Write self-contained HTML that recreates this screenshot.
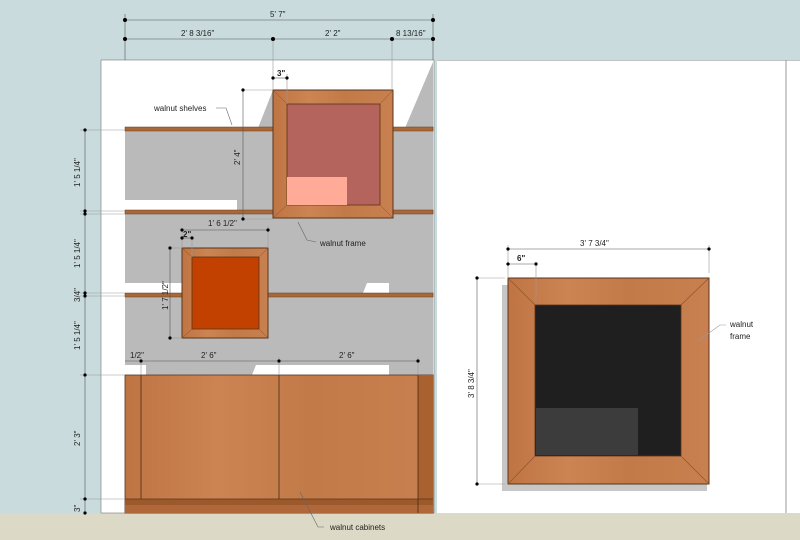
<!DOCTYPE html>
<html><head><meta charset="utf-8"><style>
html,body{margin:0;padding:0;background:#c9dbdc;}
svg{display:block}
text{font-family:"Liberation Sans",sans-serif;font-size:8px;fill:#222;}
</style></head><body>
<svg width="800" height="540" viewBox="0 0 800 540" xmlns="http://www.w3.org/2000/svg">
<defs>
<linearGradient id="wood" x1="0" y1="0" x2="1" y2="0">
<stop offset="0" stop-color="#bf7443"/><stop offset="0.3" stop-color="#cc8453"/><stop offset="0.6" stop-color="#c27a48"/><stop offset="1" stop-color="#c98050"/>
</linearGradient>
</defs>
<rect x="0" y="0" width="800" height="540" fill="#c9dbdc"/>
<rect x="0" y="513" width="800" height="27" fill="#dcd9c6"/>
<!-- left panel -->
<rect x="101" y="60" width="333" height="453" fill="#fff" stroke="#777" stroke-width="0.6"/>
<!-- right panel -->
<rect x="437" y="60" width="363" height="453" fill="#fff"/>
<line x1="437" y1="60.5" x2="800" y2="60.5" stroke="#888" stroke-width="0.6"/>
<line x1="786" y1="60" x2="786" y2="513" stroke="#999" stroke-width="1"/>
<!-- gray area -->
<rect x="125" y="130" width="308" height="245" fill="#bababa"/>
<polygon points="258,128 273,90 273,128" fill="#bababa"/>
<polygon points="405,128 433,62 433,128" fill="#bababa"/>
<!-- white patches -->
<rect x="125" y="200" width="112" height="10" fill="#fff"/>
<rect x="125" y="283" width="58" height="10" fill="#fff"/>
<polygon points="363,293 367,283 389,283 389,293" fill="#fff"/>
<rect x="125" y="365" width="21" height="10" fill="#fff"/>
<polygon points="252,375 256,365 389,365 389,375" fill="#fff"/>
<!-- shelves -->
<rect x="125" y="127" width="308" height="4" fill="#a8683a" stroke="#6a3e1e" stroke-width="0.5"/>
<rect x="125" y="210" width="308" height="4" fill="#a8683a" stroke="#6a3e1e" stroke-width="0.5"/>
<rect x="125" y="293" width="308" height="4" fill="#a8683a" stroke="#6a3e1e" stroke-width="0.5"/>
<!-- big frame -->
<rect x="273" y="90" width="120" height="128" fill="url(#wood)" stroke="#5a3418" stroke-width="1"/>
<rect x="287" y="104" width="93" height="101" fill="#b4645c" stroke="#5a3418" stroke-width="0.8"/>
<rect x="287" y="177" width="60" height="28" fill="#ffab98"/>
<g stroke="#8a5028" stroke-width="0.5"><line x1="273" y1="90" x2="287" y2="104"/><line x1="393" y1="90" x2="380" y2="104"/><line x1="273" y1="218" x2="287" y2="205"/><line x1="393" y1="218" x2="380" y2="205"/></g>
<!-- small frame -->
<rect x="182" y="248" width="86" height="90" fill="url(#wood)" stroke="#5a3418" stroke-width="1"/>
<rect x="192" y="257" width="67" height="72" fill="#c24101" stroke="#5a3418" stroke-width="0.8"/>
<g stroke="#8a5028" stroke-width="0.5"><line x1="182" y1="248" x2="192" y2="257"/><line x1="268" y1="248" x2="259" y2="257"/><line x1="182" y1="338" x2="192" y2="329"/><line x1="268" y1="338" x2="259" y2="329"/></g>
<!-- cabinet -->
<rect x="125" y="375" width="308" height="138" fill="url(#wood)" stroke="#5a3418" stroke-width="0.8"/>
<rect x="418" y="375" width="15" height="138" fill="#a8612f"/>
<rect x="125" y="499" width="308" height="14" fill="#b0683a"/>
<rect x="125" y="499" width="308" height="6" fill="#9c5a2c"/>
<line x1="125" y1="499" x2="433" y2="499" stroke="#5a3418" stroke-width="0.8"/>
<g stroke="#4a2a12" stroke-width="0.8"><line x1="141" y1="375" x2="141" y2="499"/><line x1="279" y1="375" x2="279" y2="499"/><line x1="418" y1="375" x2="418" y2="513"/></g>
<!-- right frame -->
<rect x="502" y="285" width="205" height="206" fill="#c7c7c7"/>
<rect x="508" y="278" width="201" height="206" fill="url(#wood)" stroke="#5a3418" stroke-width="1"/>
<rect x="535" y="305" width="146" height="151" fill="#1f1f1f" stroke="#5a3418" stroke-width="0.8"/>
<rect x="536" y="408" width="102" height="47" fill="#3c3c3c"/>
<g stroke="#8a5028" stroke-width="0.6"><line x1="508" y1="278" x2="535" y2="305"/><line x1="709" y1="278" x2="681" y2="305"/><line x1="508" y1="484" x2="535" y2="456"/><line x1="709" y1="484" x2="681" y2="456"/></g>
<!-- dimension lines -->
<g stroke="#555" stroke-width="0.6" fill="none">
<line x1="125" y1="20" x2="433" y2="20"/>
<line x1="125" y1="39" x2="433" y2="39"/>
<line x1="125" y1="14" x2="125" y2="60"/><line x1="433" y1="14" x2="433" y2="60"/>
<line x1="273" y1="39" x2="273" y2="90" stroke="#999"/>
<line x1="392" y1="39" x2="392" y2="90" stroke="#999"/>
<line x1="273" y1="78" x2="287" y2="78"/><line x1="287" y1="74" x2="287" y2="104" stroke="#999"/>
<line x1="243" y1="90" x2="273" y2="90" stroke="#999"/>
<line x1="243" y1="90" x2="243" y2="219"/>
<line x1="243" y1="219" x2="273" y2="219" stroke="#999"/>
<line x1="182" y1="230" x2="268" y2="230"/><line x1="268" y1="226" x2="268" y2="248" stroke="#999"/>
<line x1="182" y1="230" x2="182" y2="248" stroke="#999"/>
<line x1="182" y1="238" x2="192" y2="238"/><line x1="192" y1="236" x2="192" y2="257" stroke="#999"/>
<line x1="170" y1="248" x2="182" y2="248" stroke="#999"/>
<line x1="170" y1="248" x2="170" y2="338"/>
<line x1="170" y1="338" x2="182" y2="338" stroke="#999"/>
<line x1="85" y1="130" x2="85" y2="513"/>
<g stroke="#999"><line x1="80" y1="130" x2="125" y2="130"/><line x1="80" y1="211" x2="125" y2="211"/><line x1="80" y1="214" x2="125" y2="214"/><line x1="80" y1="293" x2="125" y2="293"/><line x1="80" y1="296" x2="125" y2="296"/><line x1="80" y1="375" x2="125" y2="375"/><line x1="80" y1="499" x2="125" y2="499"/></g>
<line x1="125" y1="361" x2="418" y2="361"/>
<line x1="141" y1="357" x2="141" y2="375" stroke="#999"/>
<line x1="279" y1="357" x2="279" y2="375" stroke="#999"/>
<line x1="418" y1="357" x2="418" y2="375" stroke="#999"/>
<line x1="508" y1="249" x2="709" y2="249"/>
<line x1="508" y1="245" x2="508" y2="278" stroke="#999"/><line x1="709" y1="245" x2="709" y2="273" stroke="#999"/>
<line x1="508" y1="264" x2="536" y2="264"/><line x1="536" y1="262" x2="536" y2="302" stroke="#999"/>
<line x1="477" y1="278" x2="505" y2="278" stroke="#999"/>
<line x1="477" y1="278" x2="477" y2="484"/>
<line x1="477" y1="484" x2="505" y2="484" stroke="#999"/>
<!-- leaders -->
<polyline points="216,108 226,108 232,125" stroke="#666"/>
<polyline points="298,222 307,240 316,242" stroke="#666"/>
<polyline points="300,492 318,527 324,527" stroke="#666"/>
<polyline points="698,341 720,325 726,325" stroke="#999"/>
</g>
<g fill="#000">
<circle cx="125" cy="20" r="2"/><circle cx="433" cy="20" r="2"/>
<circle cx="125" cy="39" r="2"/><circle cx="273" cy="39" r="2"/><circle cx="392" cy="39" r="2"/><circle cx="433" cy="39" r="2"/>
<circle cx="273" cy="78" r="1.6"/><circle cx="287" cy="78" r="1.6"/>
<circle cx="243" cy="90" r="1.6"/><circle cx="243" cy="219" r="1.6"/>
<circle cx="182" cy="230" r="1.6"/><circle cx="268" cy="230" r="1.6"/>
<circle cx="182" cy="238" r="1.6"/><circle cx="192" cy="238" r="1.6"/>
<circle cx="170" cy="248" r="1.6"/><circle cx="170" cy="338" r="1.6"/>
<circle cx="85" cy="130" r="1.6"/><circle cx="85" cy="211" r="1.6"/><circle cx="85" cy="214" r="1.6"/><circle cx="85" cy="293" r="1.6"/><circle cx="85" cy="296" r="1.6"/><circle cx="85" cy="375" r="1.6"/><circle cx="85" cy="499" r="1.6"/><circle cx="85" cy="513" r="1.6"/>
<circle cx="141" cy="361" r="1.6"/><circle cx="279" cy="361" r="1.6"/><circle cx="418" cy="361" r="1.6"/>
<circle cx="508" cy="249" r="1.6"/><circle cx="709" cy="249" r="1.6"/>
<circle cx="508" cy="264" r="1.6"/><circle cx="536" cy="264" r="1.6"/>
<circle cx="477" cy="278" r="1.6"/><circle cx="477" cy="484" r="1.6"/>
</g>
<!-- labels -->
<text x="270" y="17">5' 7"</text>
<text x="181" y="36">2' 8 3/16"</text>
<text x="325" y="36">2' 2"</text>
<text x="396" y="36">8 13/16"</text>
<text x="277" y="76" font-weight="bold">3"</text>
<text x="154" y="111">walnut shelves</text>
<text x="208" y="226">1' 6 1/2"</text>
<text x="320" y="246">walnut frame</text>
<text x="183" y="237" font-weight="bold">2"</text>
<text x="130" y="358">1/2"</text>
<text x="201" y="358">2' 6"</text>
<text x="339" y="358">2' 6"</text>
<text x="330" y="530">walnut cabinets</text>
<text x="580" y="246">3' 7 3/4"</text>
<text x="517" y="261" font-weight="bold">6"</text>
<text x="730" y="327">walnut</text>
<text x="730" y="339">frame</text>
<text transform="translate(240,165) rotate(-90)">2' 4"</text>
<text transform="translate(168,310) rotate(-90)">1' 7 1/2"</text>
<text transform="translate(80,187) rotate(-90)">1' 5 1/4"</text>
<text transform="translate(80,268) rotate(-90)">1' 5 1/4"</text>
<text transform="translate(80,302) rotate(-90)">3/4"</text>
<text transform="translate(80,350) rotate(-90)">1' 5 1/4"</text>
<text transform="translate(80,446) rotate(-90)">2' 3"</text>
<text transform="translate(80,512) rotate(-90)">3"</text>
<text transform="translate(474,398) rotate(-90)">3' 8 3/4"</text>
</svg>
</body></html>
